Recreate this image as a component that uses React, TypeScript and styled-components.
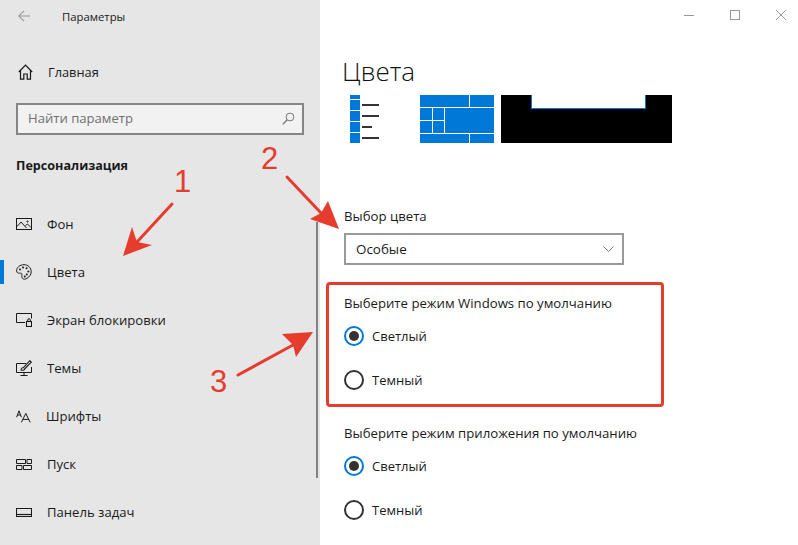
import styled, { createGlobalStyle } from "styled-components"

const GlobalStyle = createGlobalStyle`
  html, body {
    margin: 0;
    padding: 0;
    background: #fff;
  }
  * {
    box-sizing: border-box;
  }
`

const Page = styled.div`
  position: relative;
  width: 798px;
  height: 545px;
  overflow: hidden;
  display: flex;
  font-family: "Open Sans", "Noto Sans", sans-serif;
  color: #1a1a1a;
`

const Sidebar = styled.aside`
  position: relative;
  width: 320px;
  height: 100%;
  background-color: #e6e6e6;
  display: flex;
  flex-direction: column;
`

const TitleBar = styled.div`
  height: 32px;
  display: flex;
  align-items: center;
  padding-left: 18px;
  gap: 32px;
  font-size: 11.3px;
`

const HomeRow = styled.div`
  height: 48px;
  margin-top: 16px;
  display: flex;
  align-items: center;
  padding-left: 18px;
  gap: 15px;
  font-size: 12.8px;
`

const SearchBox = styled.div`
  width: 288px;
  height: 32px;
  margin: 7px 0 0 16px;
  border: 2px solid #858585;
  background-color: #f2f2f2;
  display: flex;
  align-items: center;
  justify-content: space-between;
  padding: 0 7px 2px 10px;
  font-size: 13.1px;
  color: #6f6f6f;
`

const GroupTitle = styled.div`
  margin: 20px 0 23px 16px;
  height: 22px;
  line-height: 22px;
  font-size: 12.6px;
  font-weight: 700;
`

const NavList = styled.nav`
  display: flex;
  flex-direction: column;
`

const NavItem = styled.div<{ $active?: boolean }>`
  position: relative;
  height: 48px;
  display: flex;
  align-items: center;
  padding-left: 16px;
  gap: 15px;
  font-size: 13.1px;

  &::before {
    content: "";
    display: ${(p) => (p.$active ? "block" : "none")};
    position: absolute;
    left: 0;
    top: 12px;
    width: 4px;
    height: 24px;
    background-color: #0078d7;
  }
`

const Scrollbar = styled.div`
  position: absolute;
  left: 316px;
  top: 222px;
  width: 2px;
  height: 256px;
  background-color: #828282;
`

const Main = styled.main`
  flex: 1;
  padding-left: 24px;
  display: flex;
  flex-direction: column;
`

const WindowControls = styled.div`
  height: 32px;
  display: flex;
  align-items: center;
  justify-content: flex-end;
  gap: 36px;
  padding: 0 12px 2px 0;
`

const PageTitle = styled.h1`
  margin: 16px 0 0 -2px;
  height: 47px;
  line-height: 47px;
  font-size: 26px;
  font-weight: 300;
  color: #111;
`

const Preview = styled.svg`
  display: block;
  margin-left: 6px;
  width: 322px;
  height: 48px;
`

const FieldLabel = styled.div<{ $top: number }>`
  margin-top: ${(p) => p.$top}px;
  height: 20px;
  line-height: 20px;
  font-size: 13.2px;
`

const Select = styled.div`
  width: 280px;
  height: 32px;
  margin-top: 7px;
  border: 2px solid #999;
  display: flex;
  align-items: center;
  justify-content: space-between;
  padding: 0 8px 0 10px;
  font-size: 13.4px;
`

const RadioGroup = styled.div<{ $top: number }>`
  margin-top: ${(p) => p.$top}px;
  display: flex;
  flex-direction: column;
  gap: 24px;
`

const RadioRow = styled.label`
  height: 20px;
  display: flex;
  align-items: center;
  gap: 8px;
  font-size: 13px;
`

const RadioMark = styled.span<{ $checked?: boolean }>`
  width: 20px;
  height: 20px;
  border-radius: 50%;
  border: 2px solid ${(p) => (p.$checked ? "#0078d7" : "#333")};
  display: flex;
  align-items: center;
  justify-content: center;

  &::after {
    content: "";
    display: ${(p) => (p.$checked ? "block" : "none")};
    width: 10px;
    height: 10px;
    border-radius: 50%;
    background-color: #333;
  }
`

const HighlightBox = styled.div`
  position: absolute;
  left: 326px;
  top: 282px;
  width: 338px;
  height: 125px;
  border: 3px solid #e53c2e;
  border-radius: 4px;
`

const ArrowLayer = styled.svg`
  position: absolute;
  left: 0;
  top: 0;
  width: 798px;
  height: 545px;
  pointer-events: none;
`

const Callout = styled.span<{ $x: number; $y: number }>`
  position: absolute;
  left: ${(p) => p.$x}px;
  top: ${(p) => p.$y}px;
  font-family: "Liberation Sans", Arial, sans-serif;
  font-size: 31px;
  line-height: 31px;
  color: #e53c2e;
`

const Glyph = styled.svg`
  display: block;
  flex: none;
  fill: none;
  stroke: #1a1a1a;
  stroke-width: 1;
`

const BackIcon = () => (
  <Glyph width="12" height="12" viewBox="0 0 12 12" style={{ stroke: "#999" }}>
    <path d="M12 6H.8M6 .8.8 6 6 11.2" strokeWidth="1.1" />
  </Glyph>
)

const HomeIcon = () => (
  <Glyph width="15" height="16" viewBox="0 0 15 16">
    <path d="M.8 8 7.5 1.2 14.2 8M2.5 6.5v8.7h3.3v-5.2h3.4v5.2h3.3V6.5" strokeWidth="1.2" />
  </Glyph>
)

const SearchIcon = () => (
  <Glyph width="13" height="13" viewBox="0 0 13 13" style={{ stroke: "#777" }}>
    <circle cx="8" cy="5" r="3.9" />
    <path d="M5.2 7.8.8 12.2" strokeWidth="1.3" />
  </Glyph>
)

const PictureIcon = () => (
  <Glyph width="16" height="12" viewBox="0 0 16 12">
    <rect x=".5" y=".5" width="15" height="11" />
    <path d="M1 8.5 5 4l5.5 6M9.5 7.5l2-1.5 3.5 3.5" />
    <circle cx="11.5" cy="3.5" r=".6" />
  </Glyph>
)

const PaletteIcon = () => (
  <Glyph width="16" height="16" viewBox="0 0 16 16">
    <path d="M8 .7C3.8.7.6 3.5.6 6.8c0 2 1.6 2.6 3 2.4 1.4-.2 2.4.2 2.3 1.6-.1 1.3-.3 2.6.6 3.6.8.9 2.6 1.1 4.4 0 2.3-1.4 4.3-3.7 4.3-6.6C15.2 3.6 12 .7 8 .7Z" />
    <g fill="#1a1a1a" stroke="none">
      <circle cx="4" cy="5.6" r="1" />
      <circle cx="7" cy="3.6" r="1" />
      <circle cx="10.6" cy="4.2" r="1" />
      <circle cx="12.4" cy="7.4" r="1" />
      <circle cx="10.8" cy="10.4" r="1" />
      <circle cx="8.8" cy="12.6" r="1" />
    </g>
  </Glyph>
)

const LockScreenIcon = () => (
  <Glyph width="16" height="14" viewBox="0 0 16 14">
    <path d="M9 9.5H.5v-9h15v5" />
    <rect x="10.5" y="8.5" width="5" height="5" strokeWidth="1.1" />
    <path d="M11.7 8.5V7a1.3 1.3 0 0 1 2.6 0v1.5" />
  </Glyph>
)

const ThemeIcon = () => (
  <Glyph width="16" height="16" viewBox="0 0 16 16">
    <path d="M10 3.5H.5v9h15V7M8 12.5v3M4.5 15.5h7" />
    <path d="M5 10c.2-2 1.2-2.4 2.2-2.2L13.8.7l1.5 1.4-6.7 6.9c.2 1-.8 1.6-3.6 1Z" strokeWidth="1.1" />
  </Glyph>
)

const FontsIcon = () => (
  <Glyph width="15" height="13" viewBox="0 0 15 13" strokeWidth="0.9">
    <path d="M.6 7.2 3 .8l2.4 6.4M1.4 5h3.2M5.4 12.4 9.8 3.4l4.4 9M6.8 9.4h6" />
  </Glyph>
)

const StartIcon = () => (
  <Glyph width="16" height="11" viewBox="0 0 16 11">
    <path d="M.5.5h9v4h-9zM11 .5h4.5v4H11zM.5 6.5H6v4H.5zM7.5 6.5h8v4h-8z" />
  </Glyph>
)

const TaskbarIcon = () => (
  <Glyph width="16" height="9" viewBox="0 0 16 9">
    <rect x=".5" y=".5" width="15" height="8" />
    <path d="M.5 6.5h15" strokeWidth="1.2" />
  </Glyph>
)

const ChevronIcon = () => (
  <Glyph width="11" height="6" viewBox="0 0 11 6" style={{ stroke: "#777" }}>
    <path d="M.4.4 5.5 5.5 10.6.4" />
  </Glyph>
)

const MinimizeIcon = () => (
  <Glyph width="10" height="10" viewBox="0 0 10 10" style={{ stroke: "#999" }}>
    <path d="M0 5.5h10" />
  </Glyph>
)

const MaximizeIcon = () => (
  <Glyph width="10" height="10" viewBox="0 0 10 10" style={{ stroke: "#999" }}>
    <rect x=".5" y=".5" width="9" height="9" />
  </Glyph>
)

const CloseIcon = () => (
  <Glyph width="10" height="10" viewBox="0 0 10 10" style={{ stroke: "#999" }}>
    <path d="M0 0 10 10M10 0 0 10" />
  </Glyph>
)

const navItems = [
  { label: "Фон", icon: <PictureIcon /> },
  { label: "Цвета", icon: <PaletteIcon />, active: true },
  { label: "Экран блокировки", icon: <LockScreenIcon /> },
  { label: "Темы", icon: <ThemeIcon /> },
  { label: "Шрифты", icon: <FontsIcon /> },
  { label: "Пуск", icon: <StartIcon /> },
  { label: "Панель задач", icon: <TaskbarIcon /> },
]

const ColorPreview = () => (
  <Preview viewBox="350 95 322 48">
    <g fill="#0078d7">
      <rect x="350" y="95" width="10" height="4" />
      <rect x="350" y="100" width="10" height="10" />
      <rect x="350" y="111" width="10" height="10" />
      <rect x="350" y="122" width="10" height="10" />
      <rect x="350" y="133" width="10" height="10" />
      <rect x="420" y="95" width="74" height="48" />
    </g>
    <g fill="#333">
      <rect x="362" y="104" width="17" height="2" />
      <rect x="362" y="115" width="17" height="2" />
      <rect x="362" y="126" width="10" height="2" />
      <rect x="362" y="137" width="17" height="2" />
    </g>
    <g fill="#fff">
      <rect x="420" y="107" width="74" height="1" />
      <rect x="420" y="133" width="74" height="1" />
      <rect x="469" y="95" width="1" height="12" />
      <rect x="469" y="134" width="1" height="9" />
      <rect x="432" y="108" width="1" height="25" />
      <rect x="444" y="108" width="1" height="25" />
      <rect x="420" y="120" width="24" height="1" />
    </g>
    <rect x="501" y="95" width="171" height="48" fill="#000" />
    <rect x="531" y="95" width="115" height="14" fill="#0078d7" />
    <rect x="532" y="95" width="113" height="13" fill="#fff" />
  </Preview>
)

export default function App() {
  return (
    <>
      <GlobalStyle />
      <Page>
        <Sidebar>
          <TitleBar>
            <BackIcon />
            <span>Параметры</span>
          </TitleBar>
          <HomeRow>
            <HomeIcon />
            <span>Главная</span>
          </HomeRow>
          <SearchBox>
            <span>Найти параметр</span>
            <SearchIcon />
          </SearchBox>
          <GroupTitle>Персонализация</GroupTitle>
          <NavList>
            {navItems.map((item) => (
              <NavItem key={item.label} $active={item.active}>
                {item.icon}
                <span>{item.label}</span>
              </NavItem>
            ))}
          </NavList>
          <Scrollbar />
        </Sidebar>
        <Main>
          <WindowControls>
            <MinimizeIcon />
            <MaximizeIcon />
            <CloseIcon />
          </WindowControls>
          <PageTitle>Цвета</PageTitle>
          <ColorPreview />
          <FieldLabel $top={63}>Выбор цвета</FieldLabel>
          <Select>
            <span>Особые</span>
            <ChevronIcon />
          </Select>
          <FieldLabel $top={28}>Выберите режим Windows по умолчанию</FieldLabel>
          <RadioGroup $top={13}>
            <RadioRow>
              <RadioMark $checked />
              Светлый
            </RadioRow>
            <RadioRow>
              <RadioMark />
              Темный
            </RadioRow>
          </RadioGroup>
          <FieldLabel $top={33}>Выберите режим приложения по умолчанию</FieldLabel>
          <RadioGroup $top={13}>
            <RadioRow>
              <RadioMark $checked />
              Светлый
            </RadioRow>
            <RadioRow>
              <RadioMark />
              Темный
            </RadioRow>
          </RadioGroup>
        </Main>
        <HighlightBox />
        <ArrowLayer viewBox="0 0 798 545">
          <g fill="#e53c2e" stroke="#e53c2e" strokeLinecap="round">
            <path d="M172 204 137 242" strokeWidth="3" />
            <path d="M123 256 132 227 137 242 152 245Z" stroke="none" />
            <path d="M287 177 321 213" strokeWidth="3" />
            <path d="M339 229 328 201 321 213 310 219Z" stroke="none" />
            <path d="M238 375 293 345" strokeWidth="3" />
            <path d="M313 332 282 334 293 345 296 357Z" stroke="none" />
          </g>
        </ArrowLayer>
        <Callout $x={174} $y={166}>1</Callout>
        <Callout $x={261} $y={143}>2</Callout>
        <Callout $x={210} $y={366}>3</Callout>
      </Page>
    </>
  )
}
